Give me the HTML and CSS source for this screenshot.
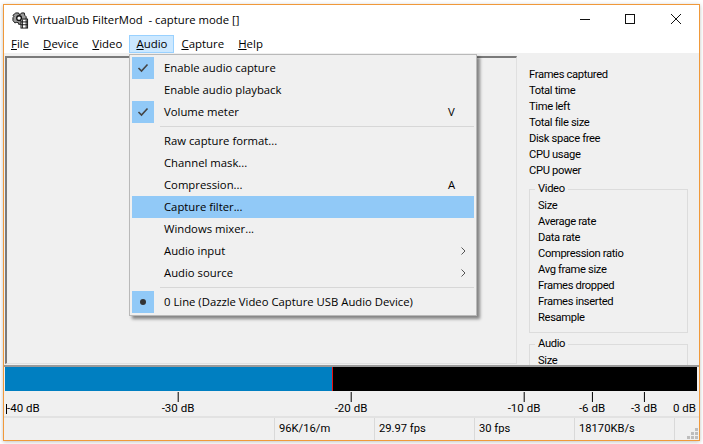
FILE: index.html
```html
<!DOCTYPE html>
<html lang="en">
<head>
  <meta charset="UTF-8">
  <title>VirtualDub FilterMod</title>
  <link rel="stylesheet" href="styles.css">
</head>
<body>
  <div class="window">
    <!-- Titellinje -->
    <div class="titlebar">
      <svg class="app-icon" width="17" height="17" viewBox="0 0 18 18">
        <path d="M4 1h3l.5 1.500h1.500L10 1h3l.5 2.500L15 5v3h-2v5H7v-1.500L5 11l-2 .5L1 9V6l1-1L1 3.500z" fill="#9a9a9a" stroke="#111" stroke-width="1"/>
        <circle cx="7.500" cy="6.500" r="2.500" fill="#fff" stroke="#111" stroke-width="1.400"/>
        <rect x="9.500" y="7.500" width="7" height="9.500" fill="#fff" stroke="#111"/>
        <path d="M11 8v9M15 8v9M9.500 10.500h7M9.500 13.500h7" stroke="#111" stroke-width="1"/>
      </svg>
      <span class="title">VirtualDub FilterMod &nbsp;- capture mode []</span>
      <div class="controls">
        <svg width="46" height="30" viewBox="0 0 46 30"><path d="M19 14.500h10" stroke="#111"/></svg>
        <svg width="46" height="30" viewBox="0 0 46 30"><rect x="18.500" y="9.500" width="9" height="9" fill="none" stroke="#111"/></svg>
        <svg width="46" height="30" viewBox="0 0 46 30"><path d="M18 9l10 10M28 9L18 19" stroke="#111"/></svg>
      </div>
    </div>

    <!-- Menulinje -->
    <div class="menubar">
      <span class="menu-item"><u>F</u>ile</span>
      <span class="menu-item"><u>D</u>evice</span>
      <span class="menu-item"><u>V</u>ideo</span>
      <span class="menu-item open"><u>A</u>udio</span>
      <span class="menu-item"><u>C</u>apture</span>
      <span class="menu-item"><u>H</u>elp</span>
    </div>

    <div class="client">
      <div class="main">
        <div class="preview"></div>
        <div class="stats">
          <div class="stat-list">
            <div>Frames captured</div>
            <div>Total time</div>
            <div>Time left</div>
            <div>Total file size</div>
            <div>Disk space free</div>
            <div>CPU usage</div>
            <div>CPU power</div>
          </div>
          <fieldset class="group">
            <legend>Video</legend>
            <div>Size</div>
            <div>Average rate</div>
            <div>Data rate</div>
            <div>Compression ratio</div>
            <div>Avg frame size</div>
            <div>Frames dropped</div>
            <div>Frames inserted</div>
            <div>Resample</div>
          </fieldset>
          <fieldset class="group">
            <legend>Audio</legend>
            <div>Size</div>
          </fieldset>
        </div>
      </div>

      <!-- Lydmåler -->
      <div class="meter">
        <div class="meter-level"></div>
        <div class="meter-rest"></div>
      </div>
      <div class="scale">
        <span class="tick first">-40 dB</span>
        <span class="tick t30">-30 dB</span>
        <span class="tick t20">-20 dB</span>
        <span class="tick t10">-10 dB</span>
        <span class="tick t6">-6 dB</span>
        <span class="tick t3">-3 dB</span>
        <span class="tick last">0 dB</span>
      </div>

      <!-- Statuslinje -->
      <div class="statusbar">
        <div class="cell grow"></div>
        <div class="cell">96K/16/m</div>
        <div class="cell">29.97 fps</div>
        <div class="cell">30 fps</div>
        <div class="cell">18170KB/s</div>
        <div class="cell grip">
          <svg width="12" height="12" viewBox="0 0 12 12" fill="#bdbdbd">
            <rect x="8" y="0" width="3" height="3"/>
            <rect x="4" y="4" width="3" height="3"/>
            <rect x="8" y="4" width="3" height="3"/>
            <rect x="0" y="8" width="3" height="3"/>
            <rect x="4" y="8" width="3" height="3"/>
            <rect x="8" y="8" width="3" height="3"/>
          </svg>
        </div>
      </div>
    </div>

    <!-- Åben Audio-menu -->
    <div class="dropdown">
      <div class="row"><span class="mark checked"><svg width="12" height="10" viewBox="0 0 12 10"><path d="M1.500 5l3 3 6-6.500" fill="none" stroke="#444" stroke-width="1.600"/></svg></span><span class="label">Enable audio capture</span></div>
      <div class="row"><span class="mark"></span><span class="label">Enable audio playback</span></div>
      <div class="row"><span class="mark checked"><svg width="12" height="10" viewBox="0 0 12 10"><path d="M1.500 5l3 3 6-6.500" fill="none" stroke="#444" stroke-width="1.600"/></svg></span><span class="label">Volume meter</span><span class="key">V</span></div>
      <div class="sep"></div>
      <div class="row"><span class="mark"></span><span class="label">Raw capture format...</span></div>
      <div class="row"><span class="mark"></span><span class="label">Channel mask...</span></div>
      <div class="row"><span class="mark"></span><span class="label">Compression...</span><span class="key">A</span></div>
      <div class="row active"><span class="mark"></span><span class="label">Capture filter...</span></div>
      <div class="row"><span class="mark"></span><span class="label">Windows mixer...</span></div>
      <div class="row"><span class="mark"></span><span class="label">Audio input</span><svg class="arrow" width="5" height="8" viewBox="0 0 5 8"><path d="M.5.500L4 4 .5 7.500" fill="none" stroke="#555"/></svg></div>
      <div class="row"><span class="mark"></span><span class="label">Audio source</span><svg class="arrow" width="5" height="8" viewBox="0 0 5 8"><path d="M.5.500L4 4 .5 7.500" fill="none" stroke="#555"/></svg></div>
      <div class="sep"></div>
      <div class="row"><span class="mark checked"><span class="dot"></span></span><span class="label">0 Line (Dazzle Video Capture USB Audio Device)</span></div>
    </div>
  </div>
</body>
</html>
```

FILE: styles.css
```css
/* Generelle stilarter */
html, body {
  margin: 0;
  height: 100%;
  overflow: hidden;
  background: #fff;
}
body {
  font-family: 'Open Sans', 'Noto Sans', sans-serif;
  font-size: 11.3px;
  color: #000;
}
.window {
  position: relative;
  box-sizing: border-box;
  width: 697px;
  height: 437px;
  margin: 4px 0 0 3px;
  border: 1px solid #f0993a;
  display: flex;
  flex-direction: column;
  background: #fff;
  box-shadow: 0 1px 4px rgba(0, 0, 0, 0.25);
}
.titlebar {
  height: 30px;
  display: flex;
  align-items: center;
  padding-left: 8px;
}
.app-icon {
  margin-right: 4px;
}
.title {
  flex: 1;
  white-space: nowrap;
  padding-bottom: 2px;
}
.controls {
  display: flex;
  height: 30px;
}
.menubar {
  height: 18px;
  display: flex;
  align-items: flex-start;
  font-size: 11.45px;
}
.menu-item {
  height: 18px;
  line-height: 17px;
  padding: 0 7px;
  box-sizing: border-box;
  white-space: nowrap;
}
.menu-item.open {
  background: #cce8ff;
  border: 1px solid #99d1ff;
  padding: 0 6px;
  line-height: 15px;
}
.client {
  flex: 1;
  min-height: 0;
  background: #f0f0f0;
  display: flex;
  flex-direction: column;
}
.main {
  flex: 1;
  min-height: 0;
  display: flex;
  overflow: hidden;
}
.preview {
  width: 512px;
  margin: 3px 0 1px 1px;
  box-sizing: border-box;
  border-top: 2px solid #7a7a7a;
  border-left: 2px solid #7a7a7a;
  border-right: 1px solid #e0e0e0;
  border-bottom: 1px solid #e0e0e0;
}
.stats {
  flex: 1;
  padding: 14px 0 0 12px;
  font-family: 'Roboto', sans-serif;
  font-size: 11.2px;
  letter-spacing: -0.35px;
  line-height: 16px;
}
.group {
  margin: 2px 11px 0 0;
  padding: 0 0 6px 8px;
  border: 1px solid #dcdcdc;
  min-width: 0;
}
.group + .group {
  margin-top: 3px;
}
.group legend {
  padding: 0 3px;
  margin-left: -3px;
  margin-bottom: 1px;
}
.meter {
  height: 26px;
  box-sizing: border-box;
  border-top: 2px solid #9a9a9a;
  display: flex;
  padding: 0 2px 0 1px;
  flex-shrink: 0;
}
.meter-level {
  width: 328px;
  box-sizing: border-box;
  background: #007fc1;
  border-right: 1px solid #e81010;
}
.meter-rest {
  flex: 1;
  background: #000;
}
.scale {
  height: 25px;
  position: relative;
  border-bottom: 2px solid #e2e2e2;
  flex-shrink: 0;
  font-family: 'Roboto', sans-serif;
  font-size: 11.5px;
}
/* Placeringen på skalaen er selve indholdet */
.tick {
  position: absolute;
  top: 9px;
  line-height: 16px;
  transform: translateX(-50%);
  white-space: nowrap;
}
.tick::before {
  content: "";
  position: absolute;
  left: 50%;
  top: -8px;
  width: 1px;
  height: 10px;
  background: #000;
}
.first {
  left: 2px;
  padding-left: 1px;
  transform: none;
}
.first::before {
  left: 0;
  top: 4px;
  height: 10px;
}
.t30 { left: 174px; }
.t20 { left: 347px; }
.t10 { left: 520px; }
.t6 { left: 588px; }
.t3 { left: 640px; }
.last {
  left: auto;
  right: 3px;
  transform: none;
}
.last::before {
  display: none;
}
.statusbar {
  height: 22px;
  display: flex;
  flex-shrink: 0;
  font-family: 'Roboto', sans-serif;
  font-size: 11.2px;
}
.cell {
  width: 100px;
  box-sizing: border-box;
  border-right: 1px solid #d9d9d9;
  padding-left: 4px;
  line-height: 22px;
  white-space: nowrap;
}
.cell.grow {
  width: 271px;
}
.cell.grip {
  flex: 1;
  border-right: 0;
  display: flex;
  align-items: flex-end;
  justify-content: flex-end;
  padding: 0;
}
.dropdown {
  position: absolute;
  left: 125px;
  top: 49px;
  width: 348px;
  box-sizing: border-box;
  padding: 2px;
  background: #f0f0f0;
  border: 1px solid #b9b9b9;
  box-shadow: 3px 3px 3px rgba(0, 0, 0, 0.45);
}
.row {
  height: 22px;
  display: flex;
  align-items: center;
  white-space: nowrap;
}
.row.active {
  background: #91c9f7;
}
.mark {
  width: 22px;
  height: 22px;
  margin-right: 10px;
  display: flex;
  align-items: center;
  justify-content: center;
  flex-shrink: 0;
}
.mark.checked {
  background: #91c9f7;
}
.dot {
  width: 6px;
  height: 6px;
  border-radius: 50%;
  background: #333;
}
.label {
  flex: 1;
  padding-bottom: 2px;
}
.key {
  width: 26px;
  padding-bottom: 2px;
}
.arrow {
  margin-right: 8px;
}
.sep {
  height: 1px;
  margin: 3px 0 3px 28px;
  background: #d7d7d7;
}
```
